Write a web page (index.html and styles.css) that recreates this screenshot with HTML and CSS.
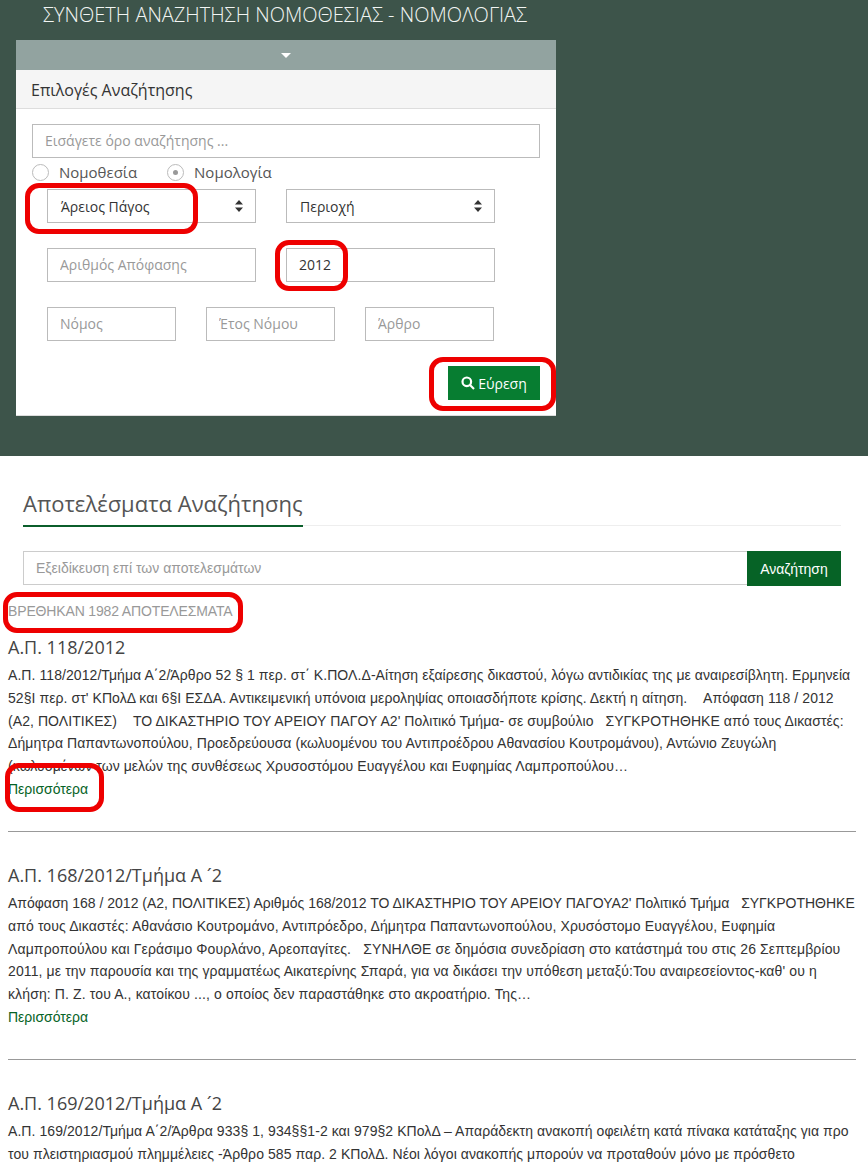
FILE: index.html
```html
<!DOCTYPE html>
<html lang="el">
<head>
  <meta charset="UTF-8" />
  <title>Σύνθετη Αναζήτηση</title>
  <link rel="stylesheet" href="styles.css">
</head>
<body>
  <section class="hero">
    <h1>ΣΥΝΘΕΤΗ ΑΝΑΖΗΤΗΣΗ ΝΟΜΟΘΕΣΙΑΣ - ΝΟΜΟΛΟΓΙΑΣ</h1>
    <div class="panel">
      <div class="panel-toggle"><span class="caret"></span></div>
      <div class="panel-heading">Επιλογές Αναζήτησης</div>
      <form class="panel-body">
        <input class="field field-wide" type="text" placeholder="Εισάγετε όρο αναζήτησης ...">
        <div class="radios">
          <label class="radio"><span class="radio-dot"></span>Νομοθεσία</label>
          <label class="radio"><span class="radio-dot checked"></span>Νομολογία</label>
        </div>
        <div class="row row-two">
          <div class="field select">Άρειος Πάγος<svg class="updown" viewBox="0 0 8 12"><path d="M4 0 8 4.6H0zM4 12 0 7.4h8z"/></svg></div>
          <div class="field select">Περιοχή<svg class="updown" viewBox="0 0 8 12"><path d="M4 0 8 4.6H0zM4 12 0 7.4h8z"/></svg></div>
        </div>
        <div class="row row-two row-second">
          <input class="field" type="text" placeholder="Αριθμός Απόφασης">
          <input class="field" type="text" value="2012">
        </div>
        <div class="row row-three">
          <input class="field" type="text" placeholder="Νόμος">
          <input class="field" type="text" placeholder="Έτος Νόμου">
          <input class="field" type="text" placeholder="Άρθρο">
        </div>
        <div class="actions">
          <button class="find" type="button">
            <svg class="search-icon" viewBox="0 0 14 14"><circle cx="5.8" cy="5.8" r="4.3"/><path d="M9 9l4 4"/></svg>
            Εύρεση
          </button>
        </div>
      </form>
    </div>
  </section>

  <section class="results">
    <div class="results-head">
      <h2>Αποτελέσματα Αναζήτησης</h2>
    </div>
    <div class="refine">
      <input type="text" placeholder="Εξειδίκευση επί των αποτελεσμάτων">
      <button type="button">Αναζήτηση</button>
    </div>
    <div class="list">
      <p class="count">ΒΡΕΘΗΚΑΝ 1982 ΑΠΟΤΕΛΕΣΜΑΤΑ</p>
      <article class="item">
        <h3>Α.Π. 118/2012</h3>
        <p>Α.Π. 118/2012/Τμήμα Α΄2/Άρθρο 52 § 1 περ. στ΄ Κ.ΠΟΛ.Δ-Αίτηση εξαίρεσης δικαστού, λόγω αντιδικίας της με αναιρεσίβλητη. Ερμηνεία 52§Ι περ. στ' ΚΠολΔ και 6§Ι ΕΣΔΑ. Αντικειμενική υπόνοια μεροληψίας οποιασδήποτε κρίσης. Δεκτή η αίτηση. &nbsp; &nbsp;Απόφαση 118 / 2012 (Α2, ΠΟΛΙΤΙΚΕΣ) &nbsp; &nbsp;ΤΟ ΔΙΚΑΣΤΗΡΙΟ ΤΟΥ ΑΡΕΙΟΥ ΠΑΓΟΥ Α2' Πολιτικό Τμήμα- σε συμβούλιο &nbsp; ΣΥΓΚΡΟΤΗΘΗΚΕ από τους Δικαστές: Δήμητρα Παπαντωνοπούλου, Προεδρεύουσα (κωλυομένου του Αντιπροέδρου Αθανασίου Κουτρομάνου), Αντώνιο Ζευγώλη (κωλυομένων των μελών της συνθέσεως Χρυσοστόμου Ευαγγέλου και Ευφημίας Λαμπροπούλου…</p>
        <a href="#">Περισσότερα</a>
      </article>
      <article class="item">
        <h3>Α.Π. 168/2012/Τμήμα Α ´2</h3>
        <p class="lines"><span class="caps-line">Απόφαση 168 / 2012 (Α2, ΠΟΛΙΤΙΚΕΣ) Αριθμός 168/2012 ΤΟ ΔΙΚΑΣΤΗΡΙΟ ΤΟΥ ΑΡΕΙΟΥ ΠΑΓΟΥΑ2' Πολιτικό Τμήμα &nbsp; ΣΥΓΚΡΟΤΗΘΗΚΕ</span><br>από τους Δικαστές: Αθανάσιο Κουτρομάνο, Αντιπρόεδρο, Δήμητρα Παπαντωνοπούλου, Χρυσόστομο Ευαγγέλου, Ευφημία<br>Λαμπροπούλου και Γεράσιμο Φουρλάνο, Αρεοπαγίτες. &nbsp; ΣΥΝΗΛΘΕ σε δημόσια συνεδρίαση στο κατάστημά του στις 26 Σεπτεμβρίου<br>2011, με την παρουσία και της γραμματέως Αικατερίνης Σπαρά, για να δικάσει την υπόθεση μεταξύ:Του αναιρεσείοντος-καθ' ου η<br>κλήση: Π. Ζ. του Α., κατοίκου ..., ο οποίος δεν παραστάθηκε στο ακροατήριο. Της…</p>
        <a href="#">Περισσότερα</a>
      </article>
      <article class="item item-last">
        <h3>Α.Π. 169/2012/Τμήμα Α ´2</h3>
        <p>Α.Π. 169/2012/Τμήμα Α΄2/Άρθρα 933§ 1, 934§§1-2 και 979§2 ΚΠολΔ – Απαράδεκτη ανακοπή οφειλέτη κατά πίνακα κατάταξης για προ του πλειστηριασμού πλημμέλειες -Άρθρο 585 παρ. 2 ΚΠολΔ. Νέοι λόγοι ανακοπής μπορούν να προταθούν μόνο με πρόσθετο</p>
      </article>
    </div>
  </section>

  <div class="mark mark-court"></div>
  <div class="mark mark-year"></div>
  <div class="mark mark-find"></div>
  <div class="mark mark-count"></div>
  <div class="mark mark-more"></div>
</body>
</html>
```

FILE: styles.css
```css
* {
  box-sizing: border-box;
}

html,
body {
  height: 1165px;
  overflow: hidden;
}

body {
  margin: 0;
  position: relative;
  background-color: #ffffff;
  color: #333333;
  font-family: "Liberation Sans", Arial, sans-serif;
  font-size: 14px;
}

.hero {
  height: 456px;
  padding: 0 16px;
  background-color: #3d544a;
}

h1 {
  height: 40px;
  margin: 0;
  padding-left: 27px;
  color: #f2f5f3;
  font-family: "Open Sans", sans-serif;
  font-size: 20px;
  font-weight: 300;
  line-height: 29px;
}

.panel {
  width: 540px;
  height: 376px;
  background-color: #ffffff;
  border-bottom: 1px solid #dddddd;
}

.panel-toggle {
  display: flex;
  align-items: center;
  justify-content: center;
  height: 30px;
  background-color: #92a3a0;
}

.caret {
  width: 0;
  height: 0;
  border-top: 5px solid #ffffff;
  border-left: 5px solid transparent;
  border-right: 5px solid transparent;
}

.panel-heading {
  height: 39px;
  padding: 0 15px;
  background-color: #f5f5f5;
  border-bottom: 1px solid #dddddd;
  color: #333333;
  font-family: "Open Sans", sans-serif;
  font-size: 16px;
  line-height: 40px;
}

.panel-body {
  padding: 15px 16px 0;
}

.field {
  height: 34px;
  padding: 0 12px;
  background-color: #ffffff;
  border: 1px solid #bbbbbb;
  border-radius: 0;
  color: #333333;
  font-family: "Open Sans", sans-serif;
  font-size: 14px;
  outline: none;
}

input.field {
  padding-bottom: 2px;
}

.field::placeholder {
  color: #999999;
}

.field-wide {
  display: block;
  width: 100%;
}

.radios {
  display: flex;
  gap: 30px;
  height: 31px;
  padding-top: 5px;
}

.radio {
  display: flex;
  align-items: center;
  gap: 10px;
  height: 18px;
  color: #555555;
  font-family: "Open Sans", sans-serif;
  font-size: 15px;
}

.radio-dot {
  display: flex;
  align-items: center;
  justify-content: center;
  width: 17px;
  height: 17px;
  border: 1px solid #bbbbbb;
  border-radius: 50%;
}

.radio-dot.checked::after {
  content: "";
  width: 5px;
  height: 5px;
  border-radius: 50%;
  background-color: #999999;
}

.row {
  display: grid;
  margin-left: 15px;
}

.row-two {
  grid-template-columns: 209px 209px;
  gap: 30px;
}

.row-second {
  margin-top: 25px;
}

.row-three {
  grid-template-columns: 129px 129px 129px;
  gap: 30px;
  margin-top: 25px;
}

.select {
  display: flex;
  align-items: center;
  justify-content: space-between;
  padding: 0 12px 0 13px;
}

.updown {
  width: 8px;
  height: 12px;
  fill: #333333;
}

.actions {
  display: flex;
  justify-content: flex-end;
  margin-top: 25px;
}

.find {
  display: flex;
  align-items: center;
  justify-content: center;
  gap: 3px;
  width: 92px;
  height: 34px;
  background-color: #077d31;
  border: none;
  color: #ffffff;
  font-family: "Open Sans", sans-serif;
  font-size: 14px;
}

.search-icon {
  width: 14px;
  height: 14px;
  fill: none;
  stroke: #ffffff;
  stroke-width: 2.2;
}

.results {
  padding-top: 33px;
}

.results-head {
  margin: 0 27px 0 23px;
  border-bottom: 1px solid #eeeeee;
}

h2 {
  width: fit-content;
  height: 38px;
  margin: 0 0 -2px;
  border-bottom: 2px solid #0b5e2b;
  color: #555555;
  font-family: "Open Sans", sans-serif;
  font-size: 22px;
  font-weight: 400;
  line-height: 28px;
}

.refine {
  display: flex;
  align-items: flex-start;
  margin: 25px 27px 0 23px;
}

.refine input {
  flex: 1;
  height: 34px;
  padding: 0 12px;
  border: 1px solid #cccccc;
  border-right: none;
  font-family: "Liberation Sans", Arial, sans-serif;
  font-size: 14px;
  outline: none;
}

.refine input::placeholder {
  color: #999999;
}

.refine button {
  width: 94px;
  height: 35px;
  background-color: #066326;
  border: none;
  color: #ffffff;
  font-family: "Liberation Sans", Arial, sans-serif;
  font-size: 14px;
}

.list {
  padding: 15px 12px 0 8px;
}

.count {
  margin: 0 0 14px;
  color: #999999;
  font-size: 14px;
  letter-spacing: -0.15px;
  line-height: 20px;
}

.item {
  height: 197px;
  border-bottom: 1px solid #999999;
}

.item + .item {
  margin-top: 31px;
}

.item-last {
  height: auto;
  border-bottom: none;
}

h3 {
  margin: 0 0 5px;
  color: #444444;
  font-family: "Open Sans", sans-serif;
  font-size: 18px;
  font-weight: 400;
  line-height: 24px;
}

.item p {
  margin: 0;
  color: #333333;
  font-size: 14px;
  letter-spacing: 0.07px;
  line-height: 22.8px;
}

.item p.lines {
  letter-spacing: 0.12px;
  white-space: nowrap;
}

.caps-line {
  letter-spacing: 0;
}

.item a {
  color: #066326;
  line-height: 23px;
  text-decoration: none;
}

.mark {
  position: absolute;
  border: 5px solid #ee0000;
  border-radius: 14px;
}

.mark-court {
  left: 25px;
  top: 183px;
  width: 173px;
  height: 51px;
}

.mark-year {
  left: 275px;
  top: 240px;
  width: 73px;
  height: 51px;
}

.mark-find {
  left: 429px;
  top: 357px;
  width: 127px;
  height: 54px;
}

.mark-count {
  left: 3px;
  top: 592px;
  width: 240px;
  height: 41px;
}

.mark-more {
  left: 5px;
  top: 763px;
  width: 99px;
  height: 49px;
}
```
